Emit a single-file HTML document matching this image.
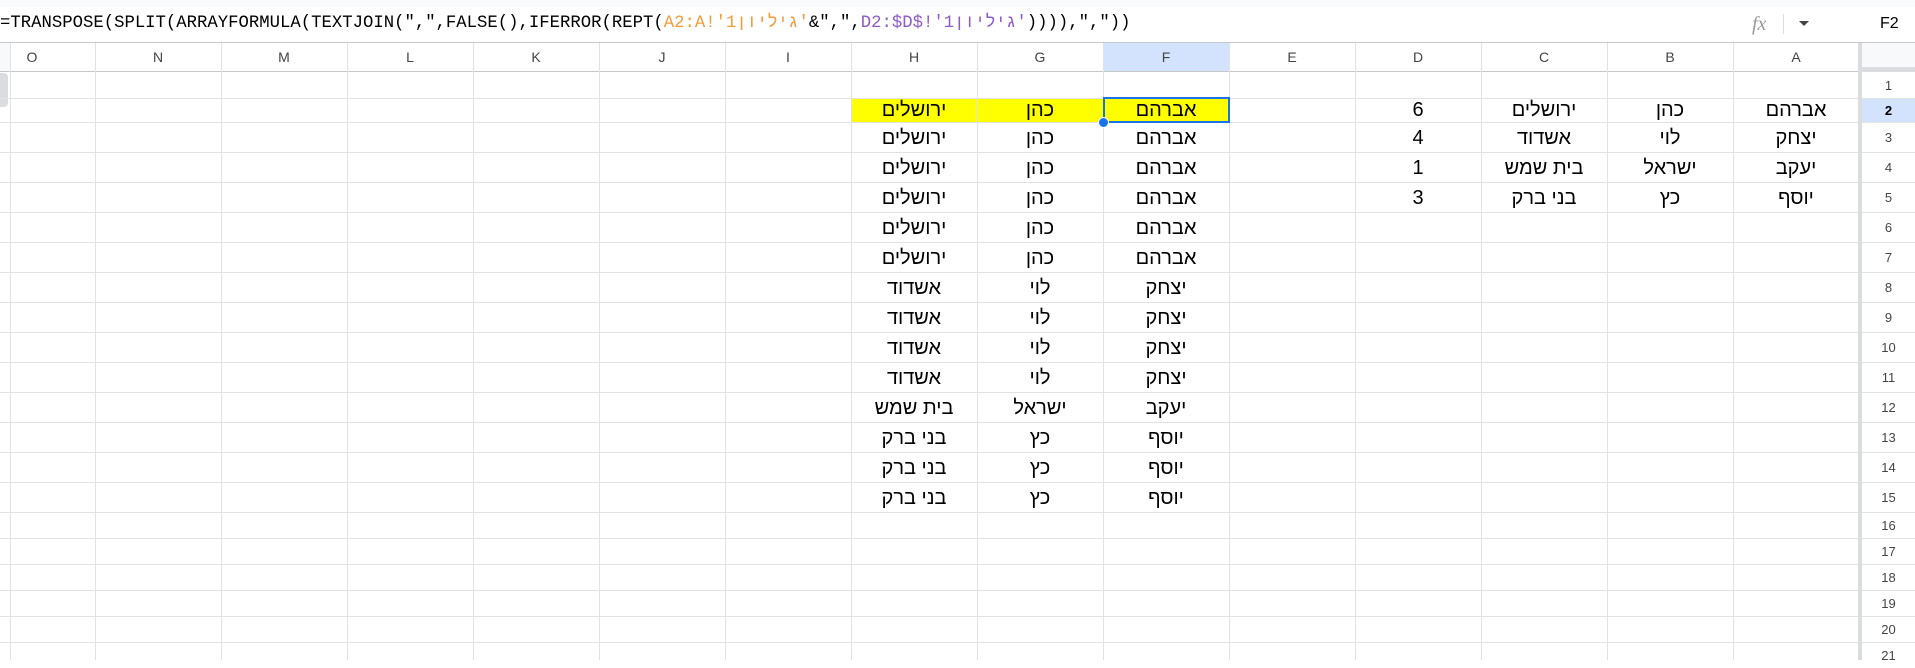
<!DOCTYPE html>
<html><head><meta charset="utf-8"><style>
*{margin:0;padding:0;box-sizing:border-box}
body{width:1915px;height:660px;overflow:hidden;background:#fff;position:relative;font-family:"Liberation Sans",sans-serif}
.a{position:absolute}
.h{position:absolute;left:0;width:1915px;height:1px;background:#e2e2e2}
.v{position:absolute;top:43px;width:1px;height:617px;background:#e2e2e2}
.cl{position:absolute;top:43px;height:28px;width:126px;text-align:center;line-height:28px;font-size:14px;color:#444}
.rn{position:absolute;left:1862px;width:53px;text-align:center;font-size:13px;color:#444;display:flex;align-items:center;justify-content:center}
.c{position:absolute;width:126px;display:flex;align-items:flex-end;justify-content:center;font-size:20px;color:#000;padding-bottom:2px;direction:rtl}
.hb{unicode-bidi:isolate;direction:rtl}
</style></head><body>
<div class="a" style="left:0;top:0;width:1915px;height:7px;background:#f9fbfd"></div>
<div class="a" style="left:0;top:13px;height:22px;line-height:22px;font-family:'Liberation Mono',monospace;font-size:17.3px;color:#000;direction:ltr;unicode-bidi:isolate;white-space:pre">=TRANSPOSE(SPLIT(ARRAYFORMULA(TEXTJOIN(",",FALSE(),IFERROR(REPT(<span style="color:#f29b38">A2:A!'1<span class="hb">גיליון</span>'</span>&amp;",",<span style="color:#8e5bc8">D2:$D$!'1<span class="hb">גיליון</span>'</span>)))),","))</div>
<div class="a" style="left:1752px;top:13px;font-family:'Liberation Serif',serif;font-style:italic;font-size:20px;color:#999">fx</div>
<div class="a" style="left:1783px;top:14px;width:1px;height:20px;background:#ddd"></div>
<div class="a" style="left:1799px;top:21px;width:0;height:0;border-left:5px solid transparent;border-right:5px solid transparent;border-top:5px solid #444"></div>
<div class="a" style="left:1880px;top:13px;font-size:16px;color:#000;line-height:22px">F2</div>
<div class="a" style="left:0;top:42px;width:1915px;height:1px;background:#c7c7c7"></div>
<div class="a" style="left:0;top:43px;width:10px;height:29px;background:#f8f9fa"></div>
<div class="a" style="left:0;top:73px;width:8px;height:34px;background:#dadce0;border-radius:0 4px 4px 0"></div>
<div class="a" style="left:1103px;top:43px;width:126px;height:29px;background:#d3e3fd"></div>
<div class="a" style="left:1859px;top:43px;width:56px;height:29px;background:#f8f9fa"></div>
<div class="a" style="left:1859px;top:98px;width:56px;height:24px;background:#d3e3fd"></div>
<div class="a" style="left:851px;top:98px;width:378px;height:24px;background:#ffff00"></div>
<div class="h" style="top:71px;background:#c7c7c7"></div>
<div class="h" style="top:98px"></div><div class="h" style="top:122px"></div><div class="h" style="top:152px"></div><div class="h" style="top:182px"></div><div class="h" style="top:212px"></div><div class="h" style="top:242px"></div><div class="h" style="top:272px"></div><div class="h" style="top:302px"></div><div class="h" style="top:332px"></div><div class="h" style="top:362px"></div><div class="h" style="top:392px"></div><div class="h" style="top:422px"></div><div class="h" style="top:452px"></div><div class="h" style="top:482px"></div><div class="h" style="top:512px"></div><div class="h" style="top:538px"></div><div class="h" style="top:564px"></div><div class="h" style="top:590px"></div><div class="h" style="top:616px"></div><div class="h" style="top:642px"></div>
<div class="v" style="left:10px"></div><div class="v" style="left:95px"></div><div class="v" style="left:221px"></div><div class="v" style="left:347px"></div><div class="v" style="left:473px"></div><div class="v" style="left:599px"></div><div class="v" style="left:725px"></div><div class="v" style="left:851px"></div><div class="v" style="left:977px"></div><div class="v" style="left:1103px"></div><div class="v" style="left:1229px"></div><div class="v" style="left:1355px"></div><div class="v" style="left:1481px"></div><div class="v" style="left:1607px"></div><div class="v" style="left:1733px"></div>
<div class="a" style="left:1858px;top:43px;width:4px;height:617px;background:#dadce0"></div>
<div class="a" style="left:1858px;top:67px;width:57px;height:5px;background:#dadce0"></div>
<div class="cl" style="left:-31px">O</div><div class="cl" style="left:95px">N</div><div class="cl" style="left:221px">M</div><div class="cl" style="left:347px">L</div><div class="cl" style="left:473px">K</div><div class="cl" style="left:599px">J</div><div class="cl" style="left:725px">I</div><div class="cl" style="left:851px">H</div><div class="cl" style="left:977px">G</div><div class="cl" style="left:1103px">F</div><div class="cl" style="left:1229px">E</div><div class="cl" style="left:1355px">D</div><div class="cl" style="left:1481px">C</div><div class="cl" style="left:1607px">B</div><div class="cl" style="left:1733px">A</div>
<div class="rn" style="top:72px;height:26px">1</div>
<div class="rn" style="top:98px;height:24px;font-weight:bold;color:#000">2</div>
<div class="rn" style="top:122px;height:30px">3</div><div class="rn" style="top:152px;height:30px">4</div><div class="rn" style="top:182px;height:30px">5</div><div class="rn" style="top:212px;height:30px">6</div><div class="rn" style="top:242px;height:30px">7</div><div class="rn" style="top:272px;height:30px">8</div><div class="rn" style="top:302px;height:30px">9</div><div class="rn" style="top:332px;height:30px">10</div><div class="rn" style="top:362px;height:30px">11</div><div class="rn" style="top:392px;height:30px">12</div><div class="rn" style="top:422px;height:30px">13</div><div class="rn" style="top:452px;height:30px">14</div><div class="rn" style="top:482px;height:30px">15</div>
<div class="rn" style="top:512px;height:26px">16</div><div class="rn" style="top:538px;height:26px">17</div><div class="rn" style="top:564px;height:26px">18</div><div class="rn" style="top:590px;height:26px">19</div><div class="rn" style="top:616px;height:26px">20</div><div class="rn" style="top:642px;height:26px">21</div>
<div class="c" style="left:1733px;top:98px;height:26px">אברהם</div><div class="c" style="left:1607px;top:98px;height:26px">כהן</div><div class="c" style="left:1481px;top:98px;height:26px">ירושלים</div><div class="c" style="left:1355px;top:98px;height:26px">6</div>
<div class="c" style="left:1733px;top:122px;height:30px">יצחק</div><div class="c" style="left:1607px;top:122px;height:30px">לוי</div><div class="c" style="left:1481px;top:122px;height:30px">אשדוד</div><div class="c" style="left:1355px;top:122px;height:30px">4</div>
<div class="c" style="left:1733px;top:152px;height:30px">יעקב</div><div class="c" style="left:1607px;top:152px;height:30px">ישראל</div><div class="c" style="left:1481px;top:152px;height:30px">בית שמש</div><div class="c" style="left:1355px;top:152px;height:30px">1</div>
<div class="c" style="left:1733px;top:182px;height:30px">יוסף</div><div class="c" style="left:1607px;top:182px;height:30px">כץ</div><div class="c" style="left:1481px;top:182px;height:30px">בני ברק</div><div class="c" style="left:1355px;top:182px;height:30px">3</div>
<div class="c" style="left:1103px;top:98px;height:26px">אברהם</div><div class="c" style="left:977px;top:98px;height:26px">כהן</div><div class="c" style="left:851px;top:98px;height:26px">ירושלים</div>
<div class="c" style="left:1103px;top:122px;height:30px">אברהם</div><div class="c" style="left:977px;top:122px;height:30px">כהן</div><div class="c" style="left:851px;top:122px;height:30px">ירושלים</div>
<div class="c" style="left:1103px;top:152px;height:30px">אברהם</div><div class="c" style="left:977px;top:152px;height:30px">כהן</div><div class="c" style="left:851px;top:152px;height:30px">ירושלים</div>
<div class="c" style="left:1103px;top:182px;height:30px">אברהם</div><div class="c" style="left:977px;top:182px;height:30px">כהן</div><div class="c" style="left:851px;top:182px;height:30px">ירושלים</div>
<div class="c" style="left:1103px;top:212px;height:30px">אברהם</div><div class="c" style="left:977px;top:212px;height:30px">כהן</div><div class="c" style="left:851px;top:212px;height:30px">ירושלים</div>
<div class="c" style="left:1103px;top:242px;height:30px">אברהם</div><div class="c" style="left:977px;top:242px;height:30px">כהן</div><div class="c" style="left:851px;top:242px;height:30px">ירושלים</div>
<div class="c" style="left:1103px;top:272px;height:30px">יצחק</div><div class="c" style="left:977px;top:272px;height:30px">לוי</div><div class="c" style="left:851px;top:272px;height:30px">אשדוד</div>
<div class="c" style="left:1103px;top:302px;height:30px">יצחק</div><div class="c" style="left:977px;top:302px;height:30px">לוי</div><div class="c" style="left:851px;top:302px;height:30px">אשדוד</div>
<div class="c" style="left:1103px;top:332px;height:30px">יצחק</div><div class="c" style="left:977px;top:332px;height:30px">לוי</div><div class="c" style="left:851px;top:332px;height:30px">אשדוד</div>
<div class="c" style="left:1103px;top:362px;height:30px">יצחק</div><div class="c" style="left:977px;top:362px;height:30px">לוי</div><div class="c" style="left:851px;top:362px;height:30px">אשדוד</div>
<div class="c" style="left:1103px;top:392px;height:30px">יעקב</div><div class="c" style="left:977px;top:392px;height:30px">ישראל</div><div class="c" style="left:851px;top:392px;height:30px">בית שמש</div>
<div class="c" style="left:1103px;top:422px;height:30px">יוסף</div><div class="c" style="left:977px;top:422px;height:30px">כץ</div><div class="c" style="left:851px;top:422px;height:30px">בני ברק</div>
<div class="c" style="left:1103px;top:452px;height:30px">יוסף</div><div class="c" style="left:977px;top:452px;height:30px">כץ</div><div class="c" style="left:851px;top:452px;height:30px">בני ברק</div>
<div class="c" style="left:1103px;top:482px;height:30px">יוסף</div><div class="c" style="left:977px;top:482px;height:30px">כץ</div><div class="c" style="left:851px;top:482px;height:30px">בני ברק</div>
<div class="a" style="left:1103px;top:97px;width:127px;height:26px;border:2px solid #1a73e8"></div>
<div class="a" style="left:1098px;top:117px;width:11px;height:11px;border-radius:50%;background:#1a73e8;border:1px solid #fff"></div>
</body></html>
